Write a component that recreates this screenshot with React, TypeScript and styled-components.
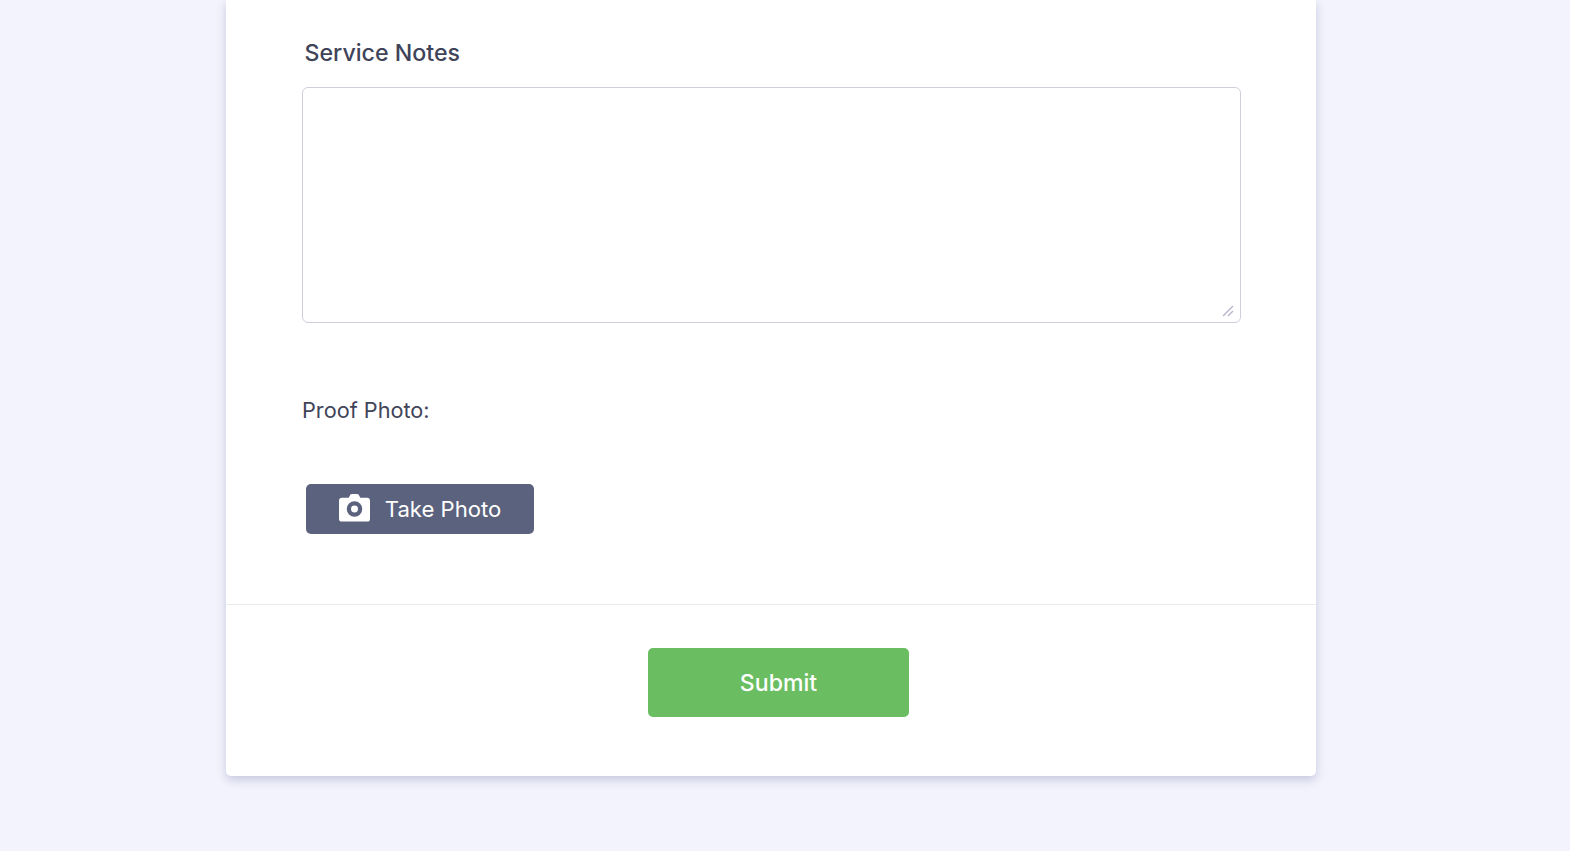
import styled, { createGlobalStyle } from "styled-components";

const GlobalStyle = createGlobalStyle`
  html, body {
    margin: 0;
    height: 851px;
    overflow: hidden;
    background: #f3f3fd;
    font-family: Inter, "Liberation Sans", sans-serif;
  }
`;

const Page = styled.div`
  width: 1570px;
  height: 851px;
  display: flex;
  justify-content: flex-start;
  padding-left: 226px;
  box-sizing: border-box;
`;

const Card = styled.div`
  width: 1090px;
  height: 775.5px;
  display: flex;
  flex-direction: column;
  background: #fff;
  border-radius: 0 0 5px 5px;
  box-shadow: 0 4px 10px rgba(70, 75, 130, 0.25);
`;

const Body = styled.div`
  height: 605px;
  box-sizing: border-box;
  padding: 39px 76px 0;
  border-bottom: 1px solid #e9e9f0;
`;

const NotesLabel = styled.label`
  display: block;
  margin-left: 2.5px;
  font-size: 23.2px;
  line-height: 28px;
  font-weight: 500;
  color: #3f4459;
`;

const NotesWrap = styled.div`
  position: relative;
  width: 939px;
  height: 236px;
  margin-top: 20px;
`;

const NotesField = styled.textarea`
  display: block;
  width: 100%;
  height: 100%;
  box-sizing: border-box;
  border: 1px solid #cfcfdb;
  border-radius: 6px;
  background: #fff;
  outline: none;
  resize: none;
`;

const ResizeGrip = styled.svg`
  position: absolute;
  right: 7px;
  bottom: 6px;
  width: 12px;
  height: 12px;
  pointer-events: none;
`;

const PhotoLabel = styled.div`
  margin-top: 73px;
  font-size: 21.7px;
  line-height: 28px;
  color: #3f4459;
`;

const PhotoButton = styled.button`
  display: flex;
  align-items: center;
  justify-content: center;
  gap: 15px;
  width: 228px;
  height: 50px;
  margin: 59.5px 0 0 4px;
  border: none;
  border-radius: 5px;
  background: #5b627d;
  color: #fff;
  font-family: inherit;
  font-size: 22.1px;
`;

const CameraIcon = styled.svg`
  width: 31px;
  height: 29px;
  flex: none;
  transform: translateY(-1px);
`;

const Footer = styled.div`
  display: flex;
  justify-content: flex-start;
  padding: 43px 0 0 422px;
`;

const SubmitButton = styled.button`
  width: 261px;
  height: 69px;
  border: none;
  border-radius: 5px;
  background: #6bbd62;
  color: #fff;
  font-family: inherit;
  font-size: 23.1px;
  font-weight: 500;
`;

export default function App() {
  return (
    <Page>
      <GlobalStyle />
      <Card>
        <Body>
          <NotesLabel>Service Notes</NotesLabel>
          <NotesWrap>
            <NotesField />
            <ResizeGrip viewBox="0 0 12 12" fill="none" stroke="#b4b4cc" strokeWidth="1.4">
              <path d="M1 11 L11 1 M6 11 L11 6" />
            </ResizeGrip>
          </NotesWrap>
          <PhotoLabel>Proof Photo:</PhotoLabel>
          <PhotoButton>
            <CameraIcon viewBox="0 0 32 29">
              <path
                fill="#fff"
                d="M10 4.5 L11.8 1.2 Q12.3 0.5 13.2 0.5 H18.8 Q19.7 0.5 20.2 1.2 L22 4.5 H29 A3 3 0 0 1 32 7.5 V26 A3 3 0 0 1 29 29 H3 A3 3 0 0 1 0 26 V7.5 A3 3 0 0 1 3 4.5 Z"
              />
              <circle cx="16" cy="16" r="8" fill="#5b627d" />
              <circle cx="16" cy="16" r="3.6" fill="#fff" />
            </CameraIcon>
            Take Photo
          </PhotoButton>
        </Body>
        <Footer>
          <SubmitButton>Submit</SubmitButton>
        </Footer>
      </Card>
    </Page>
  );
}
